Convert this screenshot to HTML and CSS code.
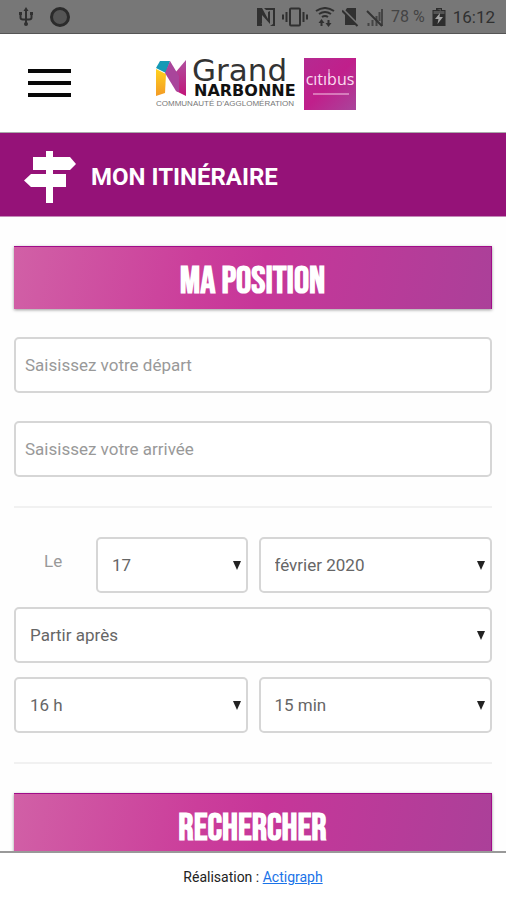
FILE: index.html
```html
<!DOCTYPE html>
<html lang="fr">
<head>
<meta charset="utf-8">
<meta name="viewport" content="width=device-width, initial-scale=1">
<title>Mon itinéraire</title>
<link rel="stylesheet" href="styles.css">
</head>
<body>
<div class="status">
  <div class="status-group status-left">
    <svg width="16" height="20" viewBox="0 0 16 20" fill="none" stroke="#303030" stroke-width="2"><path d="M8 3v13M2.500 7v3.500q0 2 2.500 2h6q2.500 0 2.500-2V7"/><path d="M5.500 4 8 0l2.500 4zM1 5h3v3H1zM12 5h3v3h-3z" fill="#303030" stroke="none"/><circle cx="8" cy="17" r="2" fill="#303030" stroke="none"/></svg>
    <svg width="20" height="20" viewBox="0 0 20 20"><circle cx="10" cy="10" r="8.500" fill="#555" stroke="#2b2b2b" stroke-width="3"/></svg>
  </div>
  <div class="status-group status-right">
    <svg width="18" height="20" viewBox="0 0 18 20"><path d="M0 1h5l6 11V5l2-1v13L5 8v8l-1 2H0zM7 1h11v18h-5l3-2V3H9zM0 18l5-1v2H0z" fill="#303030"/></svg>
    <svg width="26" height="20" viewBox="0 0 26 20" fill="none" stroke="#303030" stroke-width="2"><rect x="8" y="1.500" width="10" height="17" rx="1"/><path d="M4.500 5v10M1 7.500v5M21.500 5v10M25 7.500v5"/></svg>
    <svg class="wifi" width="20" height="20" viewBox="0 0 20 20" fill="none" stroke="#303030" stroke-width="2"><path d="M1 4q9-6 18 0M4 7q6-4 12 0M7 10q3-2 6 0"/><path d="M6.500 19v-4M13.500 13v4"/><path d="M3.500 16 6.500 12l3 4zM10.500 16l3 4 3-4z" fill="#303030" stroke="none"/></svg>
    <svg width="17" height="20" viewBox="0 0 17 20"><path d="M5 1h9v17H3V4z" fill="#303030"/><path d="M0 2 16 18" stroke="#777" stroke-width="3"/><path d="M0 3.500 15.500 19" stroke="#303030" stroke-width="2"/></svg>
    <svg width="18" height="20" viewBox="0 0 18 20" fill="none" stroke="#444" stroke-width="2"><path d="M2.500 16v3M6.500 13v6M10.500 9v10M16 2v17M13.500 5v9"/><path d="M1 4 16 19" stroke="#333"/></svg>
    <span class="charge">78 %</span>
    <svg width="14" height="20" viewBox="0 0 14 20"><path d="M4 1h6v2h3.500v16H.5V3H4z" fill="#2d2d2d"/><path d="M5 2h4v2H1.500v3h11V4H9" fill="#555"/><path d="M8 6 3 12h3.500L5.500 17l5.500-7H7.500z" fill="#a4a4a4"/></svg>
    <span class="clock">16:12</span>
  </div>
</div>

<header class="header">
  <button class="menu" type="button" aria-label="Menu"><span></span><span></span><span></span></button>
  <svg class="logo" width="208" height="68" viewBox="-6 -8 208 68" role="img" aria-label="Grand Narbonne Citibus">
    <defs>
      <linearGradient id="square" x1="0" y1="0" x2="1" y2="1"><stop offset="0" stop-color="#b52a91"/><stop offset=".5" stop-color="#c01f8b"/><stop offset="1" stop-color="#a9459b"/></linearGradient>
      <linearGradient id="amber" x1="0" y1="0" x2="0" y2="1"><stop offset="0" stop-color="#ffd21f"/><stop offset="1" stop-color="#f39a25"/></linearGradient>
      <linearGradient id="pink" x1="0" y1="0" x2="0" y2="1"><stop offset="0" stop-color="#b0509f"/><stop offset="1" stop-color="#c11579"/></linearGradient>
    </defs>
    <path d="M1 12 11 17 10 36 1 39z" fill="url(#amber)"/>
    <path d="M1 11 5 4h10l-4 12z" fill="#1599b5"/>
    <path d="M20 16 31 3v36l-10-5z" fill="url(#pink)"/>
    <path d="M15 4 24 19v16l-3-1L10 16z" fill="#a9459b"/>
    <text class="logo-grand" x="37" y="24">Grand</text>
    <text class="logo-narbonne" x="39" y="39">NARBONNE</text>
    <text class="logo-sub" x="1" y="49">COMMUNAUTÉ D’AGGLOMÉRATION</text>
    <rect x="149" y="1" width="52" height="52" fill="url(#square)"/>
    <text class="logo-bus" x="175" y="28">cıtıbus</text>
    <path d="M174 12v4M158 37h36" stroke="#f5c9e5" fill="none"/>
  </svg>
</header>

<div class="banner">
  <svg width="52" height="54" viewBox="0 0 52 54" fill="#fff"><path d="M22 1h7v6h17l6 7-6 6H29v4h13v13H29v16h-7V37H7l-7-6.500L7 24h15v-4H9V7h13z"/></svg>
  <h1>MON ITINÉRAIRE</h1>
</div>

<main class="main">
  <form class="form">
    <button class="action" type="button">MA POSITION</button>
    <input class="field" type="text" placeholder="Saisissez votre départ" aria-label="Départ">
    <input class="field" type="text" placeholder="Saisissez votre arrivée" aria-label="Arrivée">
    <hr>
    <div class="choices">
      <div class="day">
        <label for="day">Le</label>
        <div class="select"><select id="day"><option>17</option></select></div>
      </div>
      <div class="select"><select aria-label="Mois"><option>février 2020</option></select></div>
      <div class="select wide"><select aria-label="Type d’horaire"><option>Partir après</option></select></div>
      <div class="select"><select aria-label="Heure"><option>16 h</option></select></div>
      <div class="select"><select aria-label="Minutes"><option>15 min</option></select></div>
    </div>
    <hr>
    <button class="action" type="submit">RECHERCHER</button>
  </form>
</main>

<footer class="footer">Réalisation : <a href="#">Actigraph</a></footer>
</body>
</html>
```
FILE: styles.css
```css
* { box-sizing: border-box; }

body {
  margin: 0;
  height: 100vh;
  overflow: hidden;
  display: flex;
  flex-direction: column;
  background: #fefefe;
  color: #666;
  font-family: Roboto, "Liberation Sans", sans-serif;
  font-size: 17px;
}

svg { display: block; flex: none; }

.status {
  flex: none;
  height: 34px;
  padding: 0 11px 0 18px;
  display: flex;
  align-items: center;
  justify-content: space-between;
  background: #777;
  border-bottom: 1px solid #555;
}
.status-group { display: flex; align-items: center; }
.status-left { gap: 16px; }
.status-right { gap: 7px; color: #444; }
.charge { font-size: 16px; }
.clock { font-size: 17px; color: #303030; }

.header {
  flex: none;
  height: 99px;
  padding: 0 28px;
  display: grid;
  grid-template-columns: 1fr auto 1fr;
  align-items: center;
  background: #fff;
  border-bottom: 1px solid #aaa;
}
.menu {
  width: 43px;
  padding: 0;
  border: 0;
  background: none;
  display: flex;
  flex-direction: column;
  gap: 8px;
}
.menu span { width: 100%; height: 4px; background: #080808; }
.logo-grand { font: 400 31px "DejaVu Sans", sans-serif; fill: #333; }
.logo-narbonne { font: 700 16px "DejaVu Sans", sans-serif; fill: #111; }
.logo-sub { font: 8px "Liberation Sans", sans-serif; fill: #777; }
.logo-bus { font: 400 16px "Open Sans", sans-serif; fill: #fbdcf0; text-anchor: middle; }

.banner {
  flex: none;
  height: 84px;
  padding: 4px 24px 0;
  display: flex;
  align-items: center;
  gap: 15px;
  background: #951278;
  border-bottom: 1px solid #c48ab8;
  color: #fff;
}
.banner h1 { margin: 0; font-size: 24px; line-height: 32px; font-weight: 700; }

.main { flex: 1; min-height: 0; overflow: hidden; padding: 29px 14px; }
.form { display: flex; flex-direction: column; gap: 28px; }

.action {
  height: 63px;
  padding: 6px 0 0;
  border: solid #a00c88;
  border-width: 1px 1px 0 0;
  background: linear-gradient(100deg, #d160a6 0%, #cb3e9b 38%, #c73699 52%, #ab4099 100%);
  box-shadow: 0 1px 3px rgba(0, 0, 0, .4);
  color: #fff;
  font: 700 38px "Bebas Neue", "Roboto Condensed", "Liberation Sans Narrow", sans-serif;
}

.field,
.select select {
  display: block;
  width: 100%;
  height: 56px;
  border: 2px solid #d6d6d6;
  border-radius: 5px;
  background: #fff;
  font: inherit;
  color: #666;
}
.field { padding: 0 9px; }
.field::placeholder { color: #999; opacity: 1; }
.select select { padding: 0 30px 0 14px; appearance: none; }

hr { width: 100%; height: 2px; margin: 1px 0; border: 0; background: #f1f1f1; }

.choices {
  display: grid;
  grid-template-columns: 1fr 1fr;
  gap: 14px 11px;
}
.day { display: flex; }
.day label { flex: 0 0 82px; padding: 14px 0 0 30px; color: #999; }
.select { position: relative; flex: 1; }
.select::after {
  content: "";
  position: absolute;
  top: 24px;
  right: 7px;
  border: solid transparent;
  border-width: 9px 4px 0;
  border-top-color: #222;
  pointer-events: none;
}
.wide { grid-column: 1 / -1; }

.footer {
  flex: none;
  height: 49px;
  background: #fff;
  border-top: 2px solid #999;
  color: #222;
  font-size: 14px;
  line-height: 48px;
  text-align: center;
}
.footer a { color: #1a73e8; }
```
